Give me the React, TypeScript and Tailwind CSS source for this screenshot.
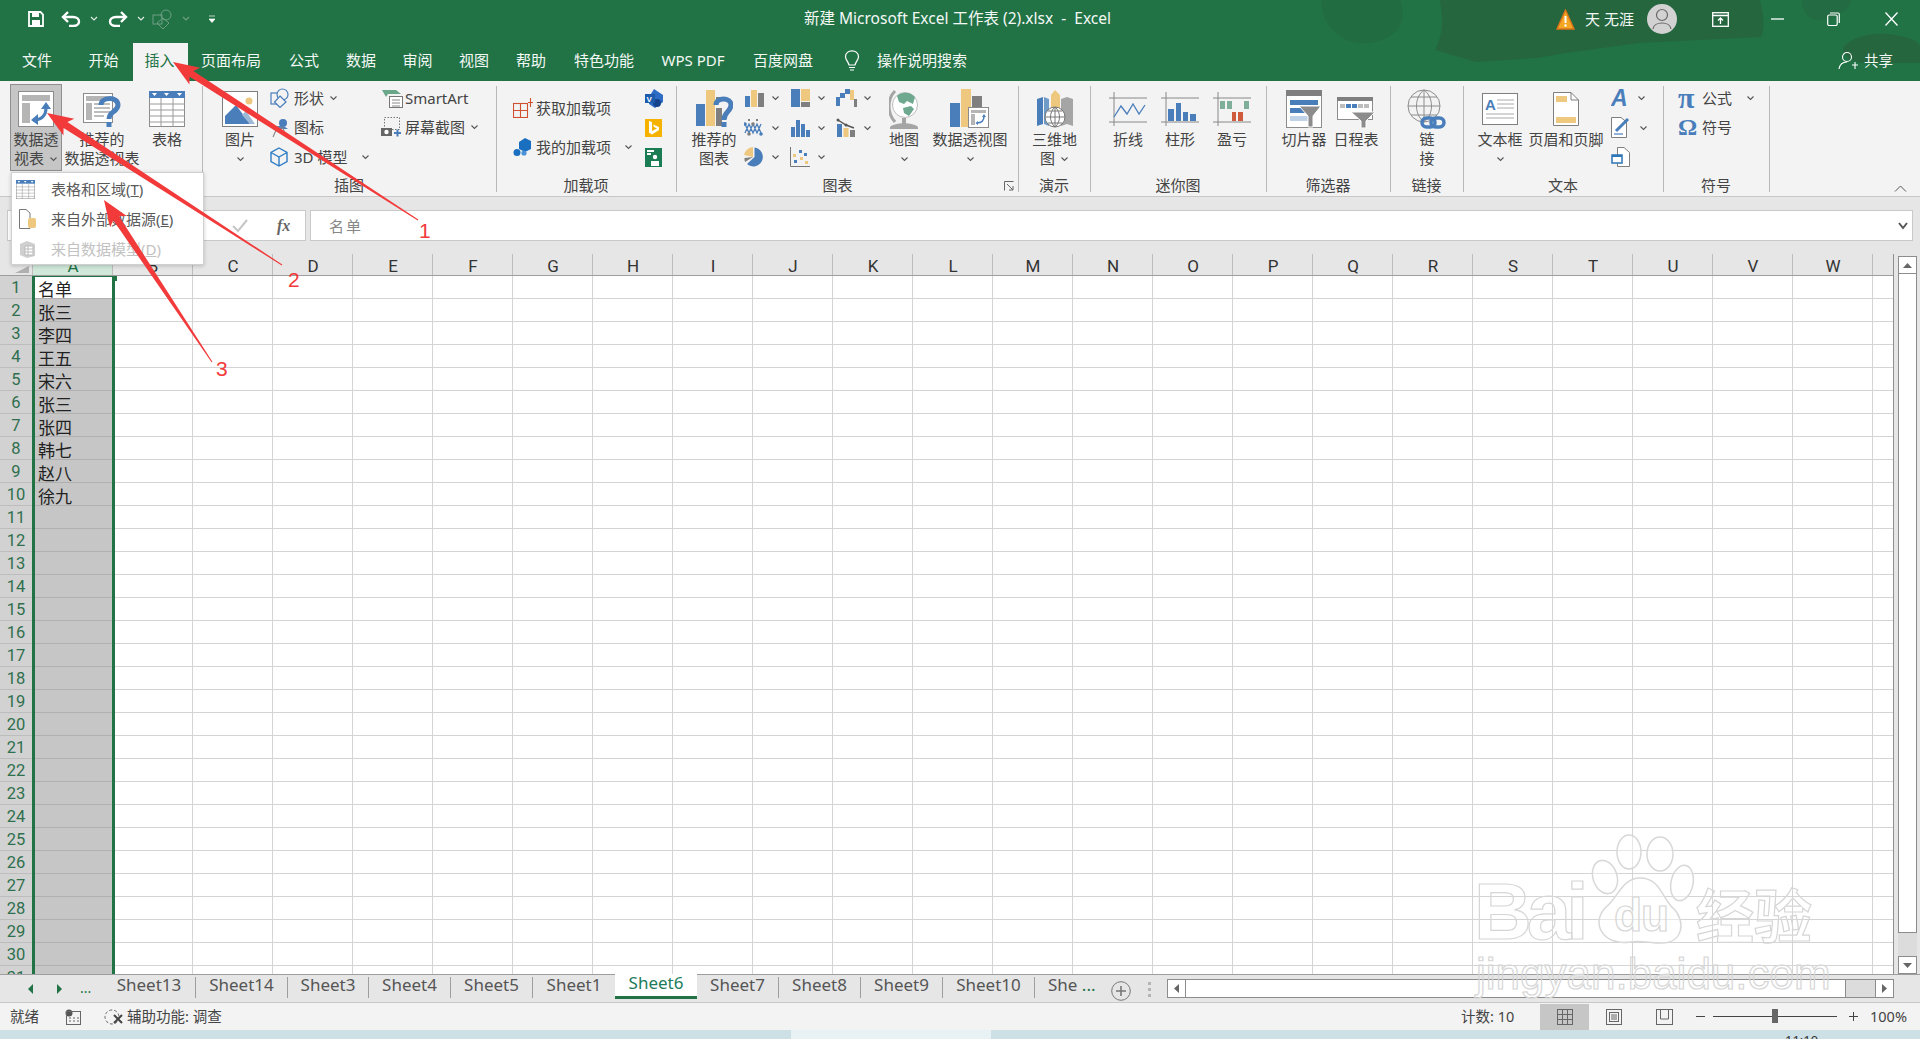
import React from "react";

const B = "#4a7ebb";
const Y = "#edc87e";
const G = "#7f7f7f";

const Chev = ({ className = "" }: { className?: string }) => (
  <svg width="9" height="6" viewBox="0 0 9 6" className={"shrink-0 " + className}>
    <path d="M1.5 1.5 4.5 4.5 7.5 1.5" fill="none" stroke="#555" strokeWidth="1.1" />
  </svg>
);

const Pivot = ({ s = 36 }: { s?: number }) => (
  <svg width={s} height={s} viewBox="0 0 36 36">
    <rect x=".5" y=".5" width="35" height="35" fill="#fff" stroke="#8c8c8c" />
    <rect x="4" y="4" width="28" height="6" fill="#b5b5b5" />
    <rect x="4" y="12" width="8" height="20" fill="#b5b5b5" />
    <path d="M15 29C23 29 28 25 28 17" fill="none" stroke={B} strokeWidth="3.2" />
    <path d="M23 18 28 11 33 18ZM20 23 13 29 20 34Z" fill={B} />
  </svg>
);
const RecPivot = () => (
  <svg width="38" height="37" viewBox="0 0 38 37">
    <rect x=".5" y="2.5" width="29" height="29" fill="#fff" stroke="#8c8c8c" />
    <rect x="3" y="5" width="24" height="5" fill="#b5b5b5" />
    <rect x="3" y="12" width="6" height="17" fill="#b5b5b5" />
    <path d="M11 13h16M11 17h16M11 21h16M11 25h10" stroke="#bdbdbd" strokeWidth="2" />
    <path d="M18 14C18 6 35 5 35 14C35 21 26 20 26 28" fill="none" stroke={B} strokeWidth="5" />
    <rect x="23.500" y="31" width="5" height="5" fill={B} />
  </svg>
);
const TableIco = ({ w = 36, h = 36 }: { w?: number; h?: number }) => (
  <svg width={w} height={h} viewBox="0 0 36 36">
    <rect x=".5" y=".5" width="35" height="35" fill="#fff" stroke="#8c8c8c" />
    <rect x="0" y="0" width="36" height="7" fill={B} />
    <path d="M3 2h5L5.500 5ZM15 2h5L17.500 5ZM28 2h5L30.500 5Z" fill="#fff" />
    <path d="M0 13h36M0 19h36M0 25h36M0 31h36M12 7v29M24 7v29" stroke="#9a9a9a" />
  </svg>
);
const Picture = () => (
  <svg width="36" height="36" viewBox="0 0 36 36">
    <rect x=".5" y=".5" width="35" height="35" fill="#fff" stroke="#7f7f7f" />
    <circle cx="27" cy="10" r="3.500" fill={Y} />
    <path d="M3 33V25L14 14 28 33Z" fill={B} />
    <path d="M20 24 24 20 33 33H28Z" fill="#9db9d8" />
  </svg>
);
const Shapes = () => (
  <svg width="20" height="20" viewBox="0 0 20 20" fill="none" stroke={B} strokeWidth="1.2">
    <rect x="1" y="5" width="10" height="11" />
    <circle cx="12.500" cy="6.500" r="5.500" fill="#f3f3f3" />
    <path d="M10 8 16 14 10 19.500 4.500 14Z" fill="#f3f3f3" />
  </svg>
);
const IconsIco = () => (
  <svg width="20" height="20" viewBox="0 0 20 20">
    <circle cx="13" cy="5" r="4" fill={B} />
    <path d="M5 9C9 7 15 8 18 11H11L9 13H5Z" fill={B} />
    <path d="M3 19 7 10H13L16 19" fill="none" stroke="#8a8a8a" strokeWidth="1.200" />
  </svg>
);
const Cube = () => (
  <svg width="18" height="20" viewBox="0 0 18 20" fill="none" stroke="#2e7cc4" strokeWidth="1.400">
    <path d="M9 1 17 5.500V14.500L9 19 1 14.500V5.500ZM1 5.500 9 10 17 5.500M9 10V19" />
  </svg>
);
const SmartArtIco = () => (
  <svg width="24" height="20" viewBox="0 0 24 20">
    <path d="M1 2H15L20 6H7L5 9Z" fill="#6aa68a" />
    <rect x="8.500" y="8.500" width="13" height="11" fill="#fff" stroke="#777" />
    <path d="M11 12h8M11 15h8M11 18h8" stroke="#888" />
  </svg>
);
const Screenshot = () => (
  <svg width="22" height="20" viewBox="0 0 22 20">
    <rect x="3.500" y=".5" width="15" height="12" fill="none" stroke="#777" strokeDasharray="1.500 1.500" />
    <rect x="0" y="11" width="11" height="8" fill="#666" />
    <circle cx="5.500" cy="15" r="2.200" fill="#fff" />
    <path d="M13 16h7M16.500 12.500v7" stroke={B} strokeWidth="2" />
  </svg>
);
const AddIns = () => (
  <svg width="20" height="20" viewBox="0 0 20 20" fill="none" stroke="#d0512f" strokeWidth="1.100">
    <rect x=".5" y="5.500" width="14" height="14" />
    <path d="M.5 12.500h14M7.500 5.500v14M15 4.500h5M17.500 0v9" />
  </svg>
);
const MyAddIns = () => (
  <svg width="20" height="20" viewBox="0 0 20 20" fill="#1b6fc0">
    <path d="M6 5 12 1 18 4V12L12 15 6 12Z" />
    <circle cx="4" cy="15.500" r="3.500" />
    <circle cx="11" cy="16" r="2.600" fill="#4a92d8" />
  </svg>
);
const Visio = () => (
  <svg width="18" height="19" viewBox="0 0 18 19">
    <path d="M9 0 18 6V13L10 19 4 15V8Z" fill="#2c6cc4" />
    <circle cx="12" cy="14" r="4" fill="#15438c" />
    <rect x="0" y="5" width="10" height="9" fill="#1d5cac" />
    <text x="1.500" y="12.500" fontSize="8" fontWeight="700" fill="#fff" fontFamily="Liberation Sans">V</text>
  </svg>
);
const Bing = () => (
  <svg width="17" height="18" viewBox="0 0 17 18">
    <rect width="17" height="18" fill="#f5b300" />
    <path d="M4 2 7 3V12L12 9.500 9 8 8 5.500 14 8V11L7 15.500 4 13.500Z" fill="#fff" />
  </svg>
);
const People = () => (
  <svg width="17" height="19" viewBox="0 0 17 19">
    <rect width="17" height="19" fill="#1a7c52" />
    <rect x="2" y="2" width="7" height="2" fill="#fff" />
    <rect x="2" y="5" width="4" height="2" fill="#fff" />
    <circle cx="10" cy="9" r="2.200" fill="#fff" />
    <path d="M6 18V13H14V18Z" fill="#fff" />
  </svg>
);
const RecChart = () => (
  <svg width="38" height="38" viewBox="0 0 38 38">
    <rect x="1" y="14" width="9" height="22" fill={B} />
    <rect x="11" y="0" width="9" height="36" fill={Y} />
    <rect x="21" y="7" width="8" height="4" fill={G} />
    <rect x="21" y="18" width="6" height="18" fill={G} />
    <path d="M21 15C21 7 36 7 36 15C36 22 29 21 29 30" fill="none" stroke={B} strokeWidth="5" />
    <rect x="26.500" y="32" width="5" height="5" fill={B} />
  </svg>
);
const Mini = ({ k }: { k: number }) => {
  const content: Record<number, React.ReactNode> = {
    0: (<><rect x="1" y="8" width="5" height="11" fill={B} /><rect x="7" y="2" width="6" height="17" fill={Y} /><rect x="14" y="5" width="6" height="14" fill={G} /></>),
    1: (<><rect x="1" y="1" width="9" height="18" fill={B} /><rect x="11" y="1" width="9" height="12" fill={Y} /><rect x="11" y="14" width="9" height="5" fill={G} /></>),
    2: (<><rect x="0" y="9" width="4" height="9" fill={B} /><rect x="4" y="5" width="5" height="5" fill={B} /><rect x="9" y="1" width="5" height="5" fill={B} /><rect x="14" y="2" width="4" height="10" fill={Y} /><rect x="18" y="11" width="3" height="8" fill={G} /></>),
    3: (<><path d="M1 6 5 15 9 6 13 15 17 6M1 15 5 6 9 15 13 6 17 15" fill="none" stroke={B} strokeWidth="1.300" /><path d="M5 1V3M13 1V3" stroke={G} strokeWidth="2" /><circle cx="5" cy="16" r="1.800" fill={G} /><circle cx="17" cy="16" r="1.800" fill={B} /><circle cx="9" cy="6" r="1.800" fill={G} /><circle cx="1" cy="6" r="1.800" fill={B} /></>),
    4: (<><rect x="1" y="9" width="4" height="10" fill={B} /><rect x="6" y="2" width="4" height="17" fill={B} /><rect x="11" y="6" width="4" height="13" fill={B} /><rect x="16" y="12" width="4" height="7" fill={B} /></>),
    5: (<><rect x="1" y="6" width="5" height="13" fill={B} /><rect x="7.500" y="10" width="5" height="9" fill={Y} /><rect x="14" y="12" width="5" height="7" fill={G} /><path d="M2 2 10 7 18 10" fill="none" stroke="#555" strokeWidth="1.400" /><circle cx="2" cy="2" r="1.500" fill="#555" /><circle cx="10" cy="7" r="1.500" fill="#555" /></>),
    6: (<><path d="M9 10 0 8A9.500 9.500 0 0 1 9 0Z" fill={Y} /><path d="M9 10 1 15A9.500 9.500 0 0 1 .5 11Z" fill={G} /><path d="M10.500 .5A9.500 9.500 0 1 1 3 17L10.500 10Z" fill={B} /></>),
    7: (<><path d="M.5 0V19.500H20" fill="none" stroke="#777" /><rect x="3" y="7" width="3" height="3" fill={Y} /><rect x="9" y="3" width="3" height="3" fill={B} /><rect x="4" y="13" width="3" height="3" fill={B} /><rect x="10" y="10" width="3" height="3" fill={Y} /><rect x="14" y="6" width="3" height="3" fill={B} /><rect x="15" y="14" width="3" height="3" fill={Y} /></>),
  };
  return <svg width="21" height="20" viewBox="0 0 21 20">{content[k]}</svg>;
};
const GlobeMap = () => (
  <svg width="30" height="40" viewBox="0 0 30 40">
    <path d="M6 2C-2 10-2 24 6 33" fill="none" stroke="#a5a5a5" strokeWidth="3" />
    <circle cx="16" cy="16" r="12.500" fill="#fff" stroke="#bdbdbd" />
    <path d="M8 7C13 2 22 3 26 8L24 15 18 12 15 15 10 13Z" fill="#6ea88f" />
    <path d="M14 19 22 17 25 20 20 27 15 24Z" fill="#6ea88f" />
    <path d="M1 38C6 33 24 33 29 38V40H1Z" fill="#a5a5a5" />
    <rect x="13" y="29" width="4" height="6" fill="#a5a5a5" />
  </svg>
);
const PivotChart = () => (
  <svg width="40" height="40" viewBox="0 0 40 40">
    <rect x="0" y="14" width="10" height="24" fill={B} />
    <rect x="11" y="0" width="10" height="38" fill={Y} />
    <rect x="22" y="7" width="10" height="31" fill={G} />
    <g transform="translate(18 18)">
      <rect x=".5" y=".5" width="20" height="20" fill="#fff" stroke="#8c8c8c" />
      <rect x="3" y="3" width="15" height="3" fill="#b5b5b5" />
      <rect x="3" y="7" width="4" height="11" fill="#b5b5b5" />
      <path d="M9 16C13 16 16 14 16 9" fill="none" stroke={B} strokeWidth="1.500" />
      <path d="M14 10 16 7 18 10ZM10 14 7.500 16 10 18Z" fill={B} />
    </g>
  </svg>
);
const Map3D = () => (
  <svg width="36" height="38" viewBox="0 0 36 38">
    <path d="M0 9 6 7V34L0 36Z" fill={B} /><path d="M7 7 12 9V36L7 34Z" fill="#6f9bc9" />
    <path d="M14 5 18 0 23 5V18H14Z" fill={Y} />
    <path d="M24 9 30 7 36 9V36L30 34 24 36Z" fill="#a5a5a5" />
    <circle cx="18" cy="27" r="10" fill="#fff" stroke="#777" />
    <path d="M8 27H28M18 17V37M11 21H25M11 33H25M18 17C12 22 12 32 18 37M18 17C24 22 24 32 18 37" fill="none" stroke="#777" />
  </svg>
);
const Spark = ({ k }: { k: number }) => (
  <svg width="38" height="34" viewBox="0 0 38 34">
    <path d="M0 6H38M0 30H38M5 0V34" stroke="#888" fill="none" />
    {k === 0 && <path d="M5 25 12 14 18 22 24 12 30 22 36 13" fill="none" stroke={B} strokeWidth="1.300" />}
    {k === 1 && (<><rect x="7" y="17" width="6" height="12" fill={B} /><rect x="15" y="11" width="5" height="18" fill={B} /><rect x="22" y="20" width="5" height="9" fill={B} /><rect x="29" y="22" width="6" height="7" fill={B} /></>)}
    {k === 2 && (<><rect x="7" y="9" width="5" height="8" fill="#7fae9b" /><rect x="14" y="9" width="5" height="8" fill="#7fae9b" /><rect x="19" y="20" width="4" height="9" fill="#cf5a3c" /><rect x="25" y="20" width="5" height="9" fill="#cf5a3c" /><rect x="31" y="9" width="5" height="8" fill="#7fae9b" /></>)}
  </svg>
);
const Slicer = () => (
  <svg width="36" height="38" viewBox="0 0 36 38">
    <rect x=".5" y=".5" width="35" height="37" fill="#fff" stroke="#8c8c8c" />
    <rect x="0" y="0" width="36" height="6" fill="#7f7f7f" />
    <rect x="4" y="10" width="28" height="5" fill={B} /><rect x="4" y="18" width="18" height="5" fill={B} /><rect x="4" y="26" width="20" height="5" fill="#bfd2e8" />
    <path d="M13 16H35L27 26V37H22V26Z" fill="#8c8c8c" stroke="#fff" />
  </svg>
);
const Timeline = () => (
  <svg width="38" height="38" viewBox="0 0 38 38">
    <rect x=".5" y="7.500" width="35" height="22" fill="#fff" stroke="#8c8c8c" />
    <rect x="0" y="7" width="36" height="4" fill="#7f7f7f" />
    <rect x="3" y="14" width="5" height="4" fill="#bdbdbd" /><rect x="9" y="14" width="5" height="4" fill={B} /><rect x="15" y="14" width="5" height="4" fill={B} /><rect x="21" y="14" width="5" height="4" fill="#bdbdbd" /><rect x="27" y="14" width="5" height="4" fill="#bdbdbd" />
    <path d="M14 22H38L29 31V38H24V31Z" fill="#8c8c8c" stroke="#fff" />
  </svg>
);
const LinkGlobe = () => (
  <svg width="40" height="40" viewBox="0 0 40 40">
    <circle cx="17" cy="17" r="16" fill="none" stroke="#8c8c8c" />
    <path d="M1 17H33M17 1V33M4 8H30M4 26H30M17 1C7 8 7 26 17 33M17 1C27 8 27 26 17 33" fill="none" stroke="#8c8c8c" />
    <rect x="15" y="29" width="13" height="9" rx="4.500" fill="none" stroke={B} strokeWidth="3.500" />
    <rect x="24" y="29" width="13" height="9" rx="4.500" fill="none" stroke={B} strokeWidth="3.500" />
  </svg>
);
const TextBox = () => (
  <svg width="36" height="32" viewBox="0 0 36 32">
    <rect x=".5" y=".5" width="35" height="31" fill="#fff" stroke="#7f7f7f" />
    <text x="3" y="17" fontSize="15" fontWeight="700" fill={B} fontFamily="Liberation Sans">A</text>
    <path d="M15 7H32M15 11H32M15 15H32M4 21H32M4 25H32" stroke="#aaa" />
  </svg>
);
const HeaderFooter = () => (
  <svg width="26" height="34" viewBox="0 0 26 34">
    <path d="M.5 .5H18L25.500 8V33.500H.5Z" fill="#fff" stroke="#7f7f7f" />
    <path d="M18 .5V8H25.500" fill="none" stroke="#7f7f7f" />
    <rect x="3" y="4" width="11" height="6" fill={Y} />
    <rect x="3" y="25" width="20" height="6" fill={Y} />
  </svg>
);
const WordArt = () => (
  <svg width="20" height="20" viewBox="0 0 20 20"><text x="0" y="18" fontSize="23" fontWeight="700" fontStyle="italic" fill={B} fontFamily="Liberation Sans">A</text></svg>
);
const Sign = () => (
  <svg width="20" height="21" viewBox="0 0 20 21">
    <path d="M.5 .5H10L15.500 5V20.500H.5Z" fill="#fff" stroke="#7f7f7f" />
    <path d="M5 14 17 2" stroke={B} strokeWidth="3" />
    <path d="M3 17H12" stroke={B} strokeWidth="1.200" />
  </svg>
);
const ObjectIco = () => (
  <svg width="19" height="20" viewBox="0 0 19 20">
    <path d="M6.500 .5H13L18.500 5.500V19.500H6.500Z" fill="#fff" stroke="#7f7f7f" />
    <rect x="1" y="8" width="10" height="8" fill="#fff" stroke="#2e75b6" strokeWidth="1.500" />
    <rect x="1" y="8" width="10" height="2" fill="#2e75b6" />
  </svg>
);

const Big = ({ icon, l1, l2, chev, chev2, className = "", h = false }: { icon: React.ReactNode; l1: string; l2?: string; chev?: boolean; chev2?: boolean; className?: string; h?: boolean }) => (
  <div className={"flex shrink-0 flex-col items-center " + (h ? "" : "pt-[4px] ") + className}>
    <div className="flex h-[38px] items-center justify-center">{icon}</div>
    <div className="mt-[2px] h-[19px] whitespace-nowrap leading-[19px]">{l1}</div>
    <div className="flex h-[19px] items-center gap-[5px] whitespace-nowrap leading-[19px]">
      {l2 && <span>{l2}</span>}
      {chev && <Chev />}
    </div>
    {chev2 && <Chev className="mt-[-1px]" />}
  </div>
);

const Small = ({ icon, text, chevClass, iconClass = "w-[24px]" }: { icon: React.ReactNode; text?: string; chevClass?: string; iconClass?: string }) => (
  <div className="flex h-[24px] items-center whitespace-nowrap">
    <div className={"flex shrink-0 items-center " + iconClass}>{icon}</div>
    {text && <span>{text}</span>}
    {chevClass && <Chev className={chevClass} />}
  </div>
);

const Group = ({ label, className, labelClass = "", children }: { label: string; className: string; labelClass?: string; children: React.ReactNode }) => (
  <div className={"relative flex h-[106px] shrink-0 flex-col border-r border-[#b8b8b8] " + className}>
    <div className="flex h-[90px]">{children}</div>
    <div className={"h-[16px] pr-[1px] text-center leading-[18px] " + labelClass}>{label}</div>
  </div>
);

const tabs: [string, string][] = [
  ["文件", "w-[74px]"], ["开始", "w-[59px]"], ["插入", "w-[55px] pr-[2px]"], ["页面布局", "w-[86px]"], ["公式", "w-[60px]"], ["数据", "w-[54px]"], ["审阅", "w-[59px]"], ["视图", "w-[54px]"], ["帮助", "w-[60px]"], ["特色功能", "w-[86px]"], ["WPS PDF", "w-[92px]"], ["百度网盘", "w-[88px]"],
];

const TitleBar = () => (
  <div className="relative flex h-[43px] items-center pb-[5px] text-[#f4f8f5]">
    <div className="flex w-[804px] items-center pl-[28px]">
      <svg width="16" height="16" viewBox="0 0 16 16"><path d="M1 1H12.500L15 3.500V15H1Z" fill="none" stroke="#fff" strokeWidth="1.800" /><rect x="4" y="1" width="7" height="5" fill="#fff" /><rect x="4" y="9" width="8" height="6" fill="#fff" /></svg>
      <svg className="ml-[17px]" width="20" height="16" viewBox="0 0 20 16"><path d="M3 6H12C20 6 20 15 12 15H8" fill="none" stroke="#fff" strokeWidth="2.400" /><path d="M7 1 2 6 7 11" fill="none" stroke="#fff" strokeWidth="2.400" /></svg>
      <svg className="ml-[9px]" width="8" height="6" viewBox="0 0 8 6"><path d="M1 1 4 4 7 1" fill="none" stroke="#e5eee8" strokeWidth="1.100" /></svg>
      <svg className="ml-[10px]" width="20" height="16" viewBox="0 0 20 16"><path d="M17 6H8C0 6 0 15 8 15H12" fill="none" stroke="#fff" strokeWidth="2.400" /><path d="M13 1 18 6 13 11" fill="none" stroke="#fff" strokeWidth="2.400" /></svg>
      <svg className="ml-[9px]" width="8" height="6" viewBox="0 0 8 6"><path d="M1 1 4 4 7 1" fill="none" stroke="#e5eee8" strokeWidth="1.100" /></svg>
      <svg className="ml-[7px]" width="21" height="21" viewBox="0 0 21 21" fill="none" stroke="#6f9f83"><rect x="1" y="6" width="9" height="9" /><circle cx="14" cy="6" r="5" /><path d="M11 9 17 14 11 20 5 14Z" /></svg>
      <svg className="ml-[9px]" width="8" height="6" viewBox="0 0 8 6"><path d="M1 1 4 4 7 1" fill="none" stroke="#6f9f83" strokeWidth="1.100" /></svg>
      <svg className="ml-[19px]" width="6" height="8" viewBox="0 0 6 8"><path d="M0 1H6M0 4H6L3 7.500 0 4Z" fill="#fff" stroke="#fff" strokeWidth=".7" /></svg>
    </div>
    <div className="whitespace-pre text-[15.5px]">新建 Microsoft Excel 工作表 (2).xlsx  -  Excel</div>
    <div className="flex flex-1 items-center justify-end pr-[22px]">
      <svg width="19" height="21" viewBox="0 0 19 21"><path d="M9.500 1 18 20H1Z" fill="#f5a623" stroke="#d9731a" strokeWidth="1.400" /><path d="M9.500 7V14" stroke="#fff" strokeWidth="2" /><circle cx="9.500" cy="16.500" r="1.200" fill="#fff" /></svg>
      <span className="ml-[10px] whitespace-nowrap text-[15px]">天 无涯</span>
      <div className="ml-[13px] flex h-[30px] w-[30px] items-center justify-center rounded-full bg-[#d2d2d2]">
        <svg width="20" height="22" viewBox="0 0 20 22" fill="none" stroke="#666" strokeWidth="1.200"><circle cx="10" cy="7" r="5.500" /><path d="M1 21C2 13 18 13 19 21" /></svg>
      </div>
      <svg className="ml-[35px]" width="17" height="15" viewBox="0 0 17 15" fill="none" stroke="#fff" strokeWidth="1.300"><rect x=".7" y=".7" width="15.600" height="13.600" /><path d="M1 3.500H16M8.500 12V6M6 8.500 8.500 6 11 8.500" /></svg>
      <svg className="ml-[42px]" width="13" height="2" viewBox="0 0 13 2"><path d="M0 1H13" stroke="#fff" strokeWidth="1.300" /></svg>
      <svg className="ml-[43px]" width="13" height="14" viewBox="0 0 13 14" fill="none" stroke="#fff" strokeWidth="1.200"><rect x=".7" y="3" width="9.500" height="10.500" rx="1.500" /><path d="M3 1H11C12 1 12.300 1.500 12.300 2.500V11" /></svg>
      <svg className="ml-[45px]" width="13" height="14" viewBox="0 0 13 14"><path d="M.5 .5 12.500 13.500M12.500 .5 .5 13.500" stroke="#fff" strokeWidth="1.300" /></svg>
    </div>
  </div>
);

const TabRow = () => (
  <div className="relative flex h-[38px] items-stretch text-[15px] text-[#f4f8f5]">
    {tabs.map(([t, w]) => (
      <div key={t} className={"flex items-center justify-center pb-[3px] " + w + (t === "插入" ? " bg-[#f3f3f3] text-[#217346]" : "")}>{t}</div>
    ))}
    <div className="flex w-[50px] items-center justify-center pb-[2px]">
      <svg width="16" height="22" viewBox="0 0 16 22" fill="none" stroke="#fff" strokeWidth="1.200"><path d="M5 15C4 11 1.500 10 1.500 6.500 1.500 3 4.500.8 8 .8S14.500 3 14.500 6.500C14.500 10 12 11 11 15Z" /><path d="M5 17.500H11M6 20H10" /></svg>
    </div>
    <div className="flex items-center pb-[3px] text-[15px]">操作说明搜索</div>
    <div className="flex flex-1 items-center justify-end pb-[2px] pr-[27px]">
      <svg width="20" height="20" viewBox="0 0 20 20" fill="none" stroke="#fff" strokeWidth="1.100"><circle cx="9" cy="6" r="4.500" /><path d="M1 18C2 12 6 11 9 11M14 14H20M17 11V18" /></svg>
      <span className="ml-[6px] text-[14.5px]">共享</span>
    </div>
  </div>
);

const Ribbon = () => (
  <div className="flex h-[116px] border-b border-[#c8c8c8] bg-[#f3f3f3] pt-[5px] text-[15px] leading-[19px] text-[#444]">
    <Group label="" className="w-[203px]">
      <div className="-mt-[2px] ml-[10px] h-[87px] w-[52px] shrink-0 border border-[#8f8f8f] bg-[#c6c6c6]">
        <Big h icon={<Pivot />} l1="数据透" l2="视表" chev className="pt-[5px]" />
      </div>
      <Big icon={<RecPivot />} l1="推荐的" l2="数据透视表" className="ml-[2px] w-[76px]" />
      <Big icon={<TableIco />} l1="表格" className="w-[54px]" />
    </Group>
    <Group label="插图" className="w-[294px]">
      <Big icon={<Picture />} l1="图片" chev className="ml-[12px] w-[50px]" />
      <div className="ml-[5px] flex h-[83px] w-[111px] flex-col justify-between">
        <Small icon={<Shapes />} text="形状" chevClass="ml-[5px]" />
        <Small icon={<IconsIco />} text="图标" />
        <Small icon={<Cube />} text="3D 模型" chevClass="ml-[14px]" />
      </div>
      <div className="flex h-[83px] flex-col gap-[5px]">
        <Small icon={<SmartArtIco />} text="SmartArt" />
        <Small icon={<Screenshot />} text="屏幕截图" chevClass="ml-[5px]" />
      </div>
    </Group>
    <Group label="加载项" className="w-[180px]">
      <div className="ml-[16px] flex w-[132px] flex-col gap-[15px] pt-[10px]">
        <Small iconClass="w-[23px]" icon={<AddIns />} text="获取加载项" />
        <Small iconClass="w-[23px]" icon={<MyAddIns />} text="我的加载项" chevClass="ml-[13px]" />
      </div>
      <div className="flex h-[83px] flex-col justify-between">
        <Small iconClass="w-[18px]" icon={<Visio />} />
        <Small iconClass="w-[18px]" icon={<Bing />} />
        <Small iconClass="w-[18px]" icon={<People />} />
      </div>
    </Group>
    <Group label="图表" className="w-[342px]" labelClass="pr-[20px]">
      <Big icon={<RecChart />} l1="推荐的" l2="图表" className="ml-[7px] w-[60px]" />
      <div className="grid h-[83px] w-[138px] shrink-0 grid-cols-3 content-between">
        {[0, 1, 2, 3, 4, 5, 6, 7].map((k) => (
          <div key={k} className="flex h-[24px] items-center">
            <Mini k={k} />
            <Chev className="ml-[6px]" />
          </div>
        ))}
      </div>
      <Big icon={<GlobeMap />} l1="地图" chev className="w-[44px]" />
      <Big icon={<PivotChart />} l1="数据透视图" chev className="ml-[4px] w-[80px]" />
      <svg className="absolute bottom-[1px] right-[4px]" width="10" height="10" viewBox="0 0 10 10" fill="none" stroke="#666"><path d="M.5 9.500V.5H9.500M3 3 9 9M5 9H9V5" /></svg>
    </Group>
    <Group label="演示" className="w-[72px]">
      <Big icon={<Map3D />} l1="三维地" l2="图" chev className="w-full" />
    </Group>
    <Group label="迷你图" className="w-[176px]">
      <Big icon={<Spark k={0} />} l1="折线" className="ml-[11px] w-[52px]" />
      <Big icon={<Spark k={1} />} l1="柱形" className="w-[52px]" />
      <Big icon={<Spark k={2} />} l1="盈亏" className="w-[52px]" />
    </Group>
    <Group label="筛选器" className="w-[124px]">
      <Big icon={<Slicer />} l1="切片器" className="ml-[11px] w-[52px]" />
      <Big icon={<Timeline />} l1="日程表" className="w-[52px]" />
    </Group>
    <Group label="链接" className="w-[73px]">
      <Big icon={<LinkGlobe />} l1="链" l2="接" className="w-full" />
    </Group>
    <Group label="文本" className="w-[200px]">
      <Big icon={<TextBox />} l1="文本框" chev className="ml-[12px] w-[48px]" />
      <Big icon={<HeaderFooter />} l1="页眉和页脚" className="ml-[4px] w-[76px]" />
      <div className="ml-[7px] flex h-[83px] flex-col justify-between">
        <Small iconClass="w-[20px]" icon={<WordArt />} chevClass="ml-[6px]" />
        <Small iconClass="w-[20px]" icon={<Sign />} chevClass="ml-[8px]" />
        <Small iconClass="w-[20px]" icon={<ObjectIco />} />
      </div>
    </Group>
    <Group label="符号" className="w-[106px]">
      <div className="ml-[14px] flex flex-col gap-[5px]">
        <Small icon={<span className="text-[30px] font-bold leading-none text-[#4a7ebb] [font-family:'Liberation_Serif',serif]">π</span>} text="公式" chevClass="ml-[14px]" />
        <Small icon={<span className="text-[24px] font-bold leading-none text-[#4a7ebb] [font-family:'Liberation_Serif',serif]">Ω</span>} text="符号" />
      </div>
    </Group>
    <div className="flex flex-1 items-end justify-end pb-[4px] pr-[13px]">
      <svg width="13" height="7" viewBox="0 0 13 7"><path d="M1 6.500 6.500 1 12 6.500" fill="none" stroke="#555" /></svg>
    </div>
  </div>
);

const FormulaBar = () => (
  <div className="flex h-[57px] bg-[#e6e6e6] pl-[7px] pt-[13px]">
    <div className="relative h-[31px] w-[299px] border border-[#c9c9c9] bg-white">
      <svg className="absolute left-[224px] top-[8px]" width="16" height="14" viewBox="0 0 16 14"><path d="M1 7 6 12 15 1" fill="none" stroke="#c6c6c6" strokeWidth="2" /></svg>
      <span className="absolute left-[269px] top-[3px] text-[16px] font-bold italic text-[#666] [font-family:'Liberation_Serif',serif]">fx</span>
    </div>
    <div className="ml-[4px] flex h-[31px] w-[1603px] items-center justify-between border border-[#c9c9c9] bg-white pl-[18px] pr-[4px]">
      <span className="pt-[2px] text-[15px] tracking-[2px] text-[#888]">名单</span>
      <svg width="10" height="8" viewBox="0 0 10 8"><path d="M1 1 5 6 9 1" fill="none" stroke="#555" strokeWidth="2" /></svg>
    </div>
  </div>
);

const cols = "ABCDEFGHIJKLMNOPQRSTUVW".split("");
const names = ["名单", "张三", "李四", "王五", "宋六", "张三", "张四", "韩七", "赵八", "徐九"];
const rows = Array.from({ length: 31 }, (_, i) => i);

const Sheet = () => (
  <div className="flex h-[720px]">
    <div className="w-[1894px] shrink-0 overflow-hidden border-r border-[#8f8f8f]">
      <div className="flex h-[22px] border-b border-[#9e9e9e] bg-[#e6e6e6] text-[17px] leading-[25px] text-[#333] [font-family:Roboto,sans-serif]">
        <div className="flex w-[33px] shrink-0 items-end justify-end border-r border-[#bdbdbd] pb-[2px] pr-[3px]">
          <svg width="14" height="7" viewBox="0 0 14 7"><path d="M14 0V7H0Z" fill="#b0b0b0" /></svg>
        </div>
        {cols.map((c) => (
          <div key={c} className={"w-[80px] shrink-0 overflow-hidden border-r border-[#bdbdbd] pl-[1px] text-center" + (c === "A" ? " bg-[#cfe8d9] text-[#217346]" : "")}>{c}</div>
        ))}
      </div>
      <div className="relative h-[698px] overflow-hidden">
        {rows.map((r) => (
          <div key={r} className="flex h-[23px]">
            <div className="w-[33px] shrink-0 border-b border-r border-[#bdbdbd] bg-[#d2d2d2] text-center text-[16.5px] leading-[24px] text-[#2f6f4e] [font-family:Roboto,sans-serif]">{r + 1}</div>
            <div className={"w-[80px] shrink-0 border-b border-r border-[#b0b0b0] pl-[5px] text-[17px] leading-[27px] text-[#222] " + (r === 0 ? "bg-white" : "bg-[#c6c6c6]")}>{names[r] ?? ""}</div>
            {cols.slice(1).map((c) => (
              <div key={c} className="w-[80px] shrink-0 border-b border-r border-[#d4d4d4]" />
            ))}
            <div className="w-[20px] shrink-0 border-b border-[#d4d4d4]" />
          </div>
        ))}
        <div className="absolute bottom-0 left-[32px] top-[-1px] w-[83px] border-x-[3px] border-t-[2px] border-x-[#217346] border-t-[#217346]" />
        <div className="absolute left-[112px] top-0 h-[5px] w-[5px] bg-[#217346]" />
      </div>
    </div>
    <div className="flex-1 bg-[#e6e6e6] pl-[4px] pt-[2px]">
      <div className="flex h-[718px] w-[19px] flex-col">
        <div className="flex h-[18px] shrink-0 items-center justify-center border border-[#8c8c8c] bg-white">
          <svg width="9" height="5" viewBox="0 0 9 5"><path d="M0 5 4.500 0 9 5Z" fill="#666" /></svg>
        </div>
        <div className="h-[659px] shrink-0 border border-t-0 border-[#8c8c8c] bg-white" />
        <div className="flex-1 bg-[#dcdcdc]" />
        <div className="flex h-[18px] shrink-0 items-center justify-center border border-[#8c8c8c] bg-white">
          <svg width="9" height="5" viewBox="0 0 9 5"><path d="M0 0H9L4.500 5Z" fill="#666" /></svg>
        </div>
      </div>
    </div>
  </div>
);

const sheets: [string, string][] = [
  ["Sheet13", "w-[93px]"], ["Sheet14", "w-[92px]"], ["Sheet3", "w-[81px]"], ["Sheet4", "w-[82px]"], ["Sheet5", "w-[82px]"], ["Sheet1", "w-[82px]"], ["Sheet6", "w-[82px]"], ["Sheet7", "w-[82px]"], ["Sheet8", "w-[82px]"], ["Sheet9", "w-[82px]"], ["Sheet10", "w-[92px]"],
];

const TabBar = () => (
  <div className="flex h-[29px] border-b border-[#c8c8c8] bg-[#e6e6e6] text-[17px] text-[#555]">
    <div className="flex h-[25px] w-[103px] shrink-0 items-center border-t border-[#9e9e9e] pl-[28px] pt-[3px]">
      <svg width="6" height="10" viewBox="0 0 6 10"><path d="M5 0V10L0 5Z" fill="#217346" /></svg>
      <svg className="ml-[23px]" width="6" height="10" viewBox="0 0 6 10"><path d="M0 0V10L5 5Z" fill="#217346" /></svg>
      <span className="ml-[17px] mt-[-2px] text-[14px] leading-none text-[#217346]">...</span>
    </div>
    {sheets.map(([s, w]) => (
      <div key={s} className={"flex h-[25px] shrink-0 items-center justify-center " + w + (s === "Sheet6" ? " border-b-[3px] border-[#217346] bg-white text-[#1d7c5b]" : " border-t border-[#9e9e9e]")}>
        <div className={"flex h-[21px] w-full items-center justify-center " + (s === "Sheet6" || s === "Sheet1" ? "" : "border-r border-[#9e9e9e]")}>
          <span className="mt-[-4px]">{s}</span>
        </div>
      </div>
    ))}
    <div className="flex h-[25px] w-[65px] shrink-0 items-center whitespace-pre border-t border-[#9e9e9e] pb-[4px] pl-[13px]">She <span className="text-[#217346]">...</span></div>
    <div className="relative flex h-[25px] flex-1 border-t border-[#9e9e9e]">
      <svg className="ml-[11px] mt-[6px] shrink-0" width="20" height="20" viewBox="0 0 20 20" fill="none" stroke="#777"><circle cx="10" cy="10" r="9.300" /><path d="M5 10H15M10 5V15" strokeWidth="1.600" /></svg>
      <svg className="ml-[17px] mt-[7px] shrink-0" width="3" height="16" viewBox="0 0 3 16"><path d="M1.500 0V3M1.500 6V9M1.500 12V15" stroke="#b5b5b5" strokeWidth="3" /></svg>
      <div className="ml-[16px] mt-[4px] flex h-[19px] w-[727px] shrink-0 border border-[#8c8c8c] bg-white">
        <div className="flex w-[18px] items-center justify-center border-r border-[#8c8c8c]"><svg width="5" height="9" viewBox="0 0 5 9"><path d="M5 0V9L0 4.500Z" fill="#666" /></svg></div>
        <div className="flex-1" />
        <div className="w-[31px] border-x border-[#8c8c8c] bg-[#dcdcdc]" />
        <div className="flex w-[17px] items-center justify-center"><svg width="5" height="9" viewBox="0 0 5 9"><path d="M0 0V9L5 4.500Z" fill="#666" /></svg></div>
      </div>
    </div>
  </div>
);

const StatusBar = () => (
  <div className="flex h-[27px] items-center bg-[#f3f3f3] text-[14.5px] text-[#444]">
    <span className="ml-[10px] w-[55px]">就绪</span>
    <svg className="shrink-0" width="16" height="16" viewBox="0 0 16 16"><circle cx="4" cy="4" r="3.500" fill="#555" /><rect x="1.500" y="2.500" width="14" height="13" fill="none" stroke="#666" /><path d="M4 9H6M8 9H10M12 9H14M4 12H6M8 12H10M12 12H14" stroke="#666" /></svg>
    <svg className="ml-[23px] shrink-0" width="20" height="18" viewBox="0 0 20 18" fill="none"><circle cx="8" cy="9" r="7" stroke="#666" strokeDasharray="3 2" /><path d="M10 7 18 15M18 7 10 15" stroke="#444" strokeWidth="2" /></svg>
    <span className="ml-[3px] w-[98px] shrink-0 whitespace-nowrap">辅助功能: 调查</span>
    <span className="ml-[1236px] w-[79px] shrink-0">计数: 10</span>
    <div className="flex h-[26px] w-[49px] shrink-0 items-center justify-center bg-[#c6c6c6]">
      <svg width="16" height="16" viewBox="0 0 16 16" fill="none" stroke="#666"><rect x=".5" y=".5" width="15" height="15" /><path d="M5.500 0V16M10.500 0V16M0 5.500H16M0 10.500H16" /></svg>
    </div>
    <div className="flex h-[26px] w-[50px] shrink-0 items-center justify-center">
      <svg width="16" height="16" viewBox="0 0 16 16" fill="none" stroke="#666"><rect x=".5" y=".5" width="15" height="15" /><rect x="3.500" y="3.500" width="9" height="9" /><path d="M5 6H11M5 8H11M5 10H11" /></svg>
    </div>
    <div className="flex h-[26px] w-[50px] shrink-0 items-center justify-center">
      <svg width="17" height="16" viewBox="0 0 17 16" fill="none" stroke="#666"><rect x=".5" y=".5" width="16" height="15" /><path d="M4.500 0V10H12.500V0" /></svg>
    </div>
    <span className="ml-[7px] h-[1px] w-[9px] shrink-0 bg-[#444]" />
    <div className="relative ml-[8px] h-[1px] w-[124px] shrink-0 bg-[#444]">
      <div className="absolute left-[59px] top-[-7px] h-[14px] w-[6px] bg-[#666]" />
    </div>
    <svg className="ml-[12px] shrink-0" width="9" height="9" viewBox="0 0 9 9"><path d="M0 4.500H9M4.500 0V9" stroke="#444" /></svg>
    <span className="ml-[12px] whitespace-nowrap">100%</span>
  </div>
);

const Desktop = () => (
  <div className="flex h-[9px]">
    <div className="w-[791px] bg-[#cde0e6]" />
    <div className="w-[200px] bg-[#e8f1f4]" />
    <div className="flex-1 overflow-hidden bg-[#cde0e6] pl-[794px] text-[13px] leading-[21px] text-[#333]">11:10</div>
  </div>
);

const Menu = () => (
  <div className="absolute left-[11px] top-[172px] flex h-[93px] w-[193px] flex-col border border-[#d0d0d0] bg-white pt-[1px] text-[15px] text-[#5a5a5a] shadow-[0_1px_4px_rgba(0,0,0,0.2)]">
    <div className="flex h-[30px] items-center pl-[4px]">
      <TableIco w={19} h={19} />
      <span className="ml-[16px]">表格和区域(<u>T</u>)</span>
    </div>
    <div className="flex h-[30px] items-center pl-[7px]">
      <svg width="18" height="20" viewBox="0 0 18 20"><path d="M.5 .5H7L11 4V19.500H.5Z" fill="#fff" stroke="#777" /><rect x="9" y="9" width="8" height="10" rx="2" fill={Y} /></svg>
      <span className="ml-[14px]">来自外部数据源(<u>E</u>)</span>
    </div>
    <div className="flex h-[30px] items-center pl-[5px] text-[#c2c2c2]">
      <svg width="20" height="20" viewBox="0 0 20 20"><path d="M3 5 10 2 18 5V17L10 19 3 16Z" fill="#cfcfcf" /><path d="M8 7H16V16H8ZM8 10H16M8 13H16M11 7V16" fill="#fff" stroke="#bbb" /></svg>
      <span className="ml-[14px]">来自数据模型(<u>D</u>)</span>
    </div>
  </div>
);

const arrow = (tx: number, ty: number, hx: number, hy: number) => {
  const dx = hx - tx, dy = hy - ty, l = Math.hypot(dx, dy);
  const ux = dx / l, uy = dy / l, nx = -uy, ny = ux;
  const p = (a: number, b: number) => `${hx - ux * a + nx * b},${hy - uy * a + ny * b}`;
  return [`${tx + nx * 0.5},${ty + ny * 0.5}`, p(22, 3.5), p(26, 10), `${hx},${hy}`, p(26, -10), p(22, -3.5), `${tx - nx * 0.5},${ty - ny * 0.5}`].join(" ");
};

const Arrows = () => (
  <svg className="pointer-events-none absolute left-0 top-0" width="500" height="400" viewBox="0 0 500 400">
    <polygon points={arrow(418, 220, 173, 62)} fill="#f23a3a" />
    <polygon points={arrow(282, 265, 47, 113)} fill="#f23a3a" />
    <polygon points={arrow(212, 362, 104, 200)} fill="#f23a3a" />
    <text x="419" y="238" fontSize="21" fill="#f23a3a" fontFamily="Liberation Sans">1</text>
    <text x="288" y="287" fontSize="21" fill="#f23a3a" fontFamily="Liberation Sans">2</text>
    <text x="216" y="376" fontSize="21" fill="#f23a3a" fontFamily="Liberation Sans">3</text>
  </svg>
);

const Watermark = () => (
  <div className="pointer-events-none absolute left-[1470px] top-[830px] h-[180px] w-[360px] text-transparent [-webkit-text-stroke:1.2px_#d6d6d6] [font-family:'Liberation_Sans',sans-serif]">
    <svg className="absolute left-0 top-0" width="360" height="180" viewBox="1470 830 360 180" fill="rgba(255,255,255,0.45)" stroke="#d8d8d8" strokeWidth="1.500">
      <ellipse cx="1629" cy="852" rx="12" ry="17" />
      <ellipse cx="1660" cy="854" rx="13" ry="17" />
      <ellipse cx="1605" cy="877" rx="12" ry="17" transform="rotate(-18 1605 877)" />
      <ellipse cx="1682" cy="883" rx="11" ry="18" transform="rotate(12 1682 883)" />
      <path d="M1640 878C1660 878 1662 898 1673 908C1686 920 1684 944 1660 943C1650 943 1640 940 1630 942C1605 946 1590 925 1605 908C1618 898 1622 878 1640 878Z" />
    </svg>
    <div className="absolute left-[4px] top-[42px] text-[80px] font-bold leading-[80px] tracking-[-5px]">Bai</div>
    <div className="absolute left-[144px] top-[62px] text-[46px] font-bold leading-[46px] tracking-[-1px]">du</div>
    <div className="absolute left-[226px] top-[48px] text-[58px] font-bold leading-[70px] [font-family:'Noto_Sans_CJK_SC',sans-serif]">经验</div>
    <div className="absolute left-[6px] top-[119px] text-[44px] leading-[50px]">jingyan.baidu.com</div>
  </div>
);

export default function App() {
  return (
    <div className="relative h-[1039px] w-[1920px] overflow-hidden bg-white [font-family:'Noto_Sans','Noto_Sans_CJK_SC',sans-serif]">
      <div className="relative bg-[#217346]">
        <svg className="absolute left-0 top-0" width="1920" height="81" viewBox="0 0 1920 81" fill="#25663f">
          <path d="M1321 0H1400C1408 20 1400 38 1370 43 1345 46 1322 30 1321 0Z" opacity=".55" />
          <path d="M1440 0H1760C1765 20 1764 30 1761 37L1639 43 1566 53 1537 58 1476 62 1435 50C1445 30 1442 15 1440 0Z" />
          <path d="M1802 0H1851C1851 12 1830 20 1815 20 1805 16 1802 8 1802 0Z" opacity=".6" />
          <path d="M1843 48C1850 36 1880 30 1900 36 1912 38 1920 42 1920 48V63H1860C1850 60 1843 55 1843 48Z" />
        </svg>
        <TitleBar />
        <TabRow />
      </div>
      <Ribbon />
      <FormulaBar />
      <Sheet />
      <TabBar />
      <StatusBar />
      <Desktop />
      <Menu />
      <Watermark />
      <Arrows />
    </div>
  );
}
